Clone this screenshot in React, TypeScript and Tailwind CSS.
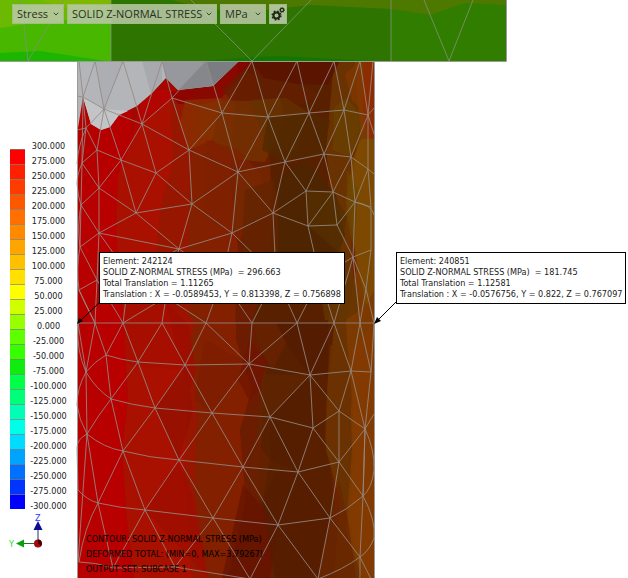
import { ChevronDown } from 'lucide-react';

type Point = [number, number];

const legendColors = [
  '#ff0000', '#ff2000', '#ff3c00', '#ff5600', '#ff7000', '#ff8a00', '#ffa500', '#ffc000',
  '#ffe000', '#ffff00', '#d0ff00', '#98ff00', '#60ff00', '#38ff00', '#10ec10', '#00ff48',
  '#00ff78', '#00ffb4', '#00ffe8', '#00dcff', '#00a4ff', '#0070ff', '#0034ff', '#0000ff',
];

const legendValues = Array.from({ length: 25 }, (_, i) => (300 - i * 25).toFixed(3));

const nodes: Record<string, Point> = {
  t0: [79, 61], t1: [95, 61], t2: [123, 61], t3: [162, 61], t4: [206, 61], t5: [252, 61],
  t6: [297, 61], t7: [334, 61], t8: [360, 61], t9: [373, 61],
  a0: [77, 96], a1: [83, 97], a2: [104, 109], a3: [142, 124], a4: [172, 98], a5: [222, 113],
  a6: [268, 117], a7: [309, 113], a8: [344, 110], a9: [368, 115], ar: [374, 108], as: [374, 134],
  b0: [77, 130], b1: [86, 128], b2: [97, 150], b3: [82, 163], b4: [121, 160], b5: [156, 173],
  b6: [189, 150], b7: [238, 172], b8: [285, 162], b9: [324, 154], b10: [351, 157], b11: [368, 169],
  br: [374, 174],
  c0: [99, 188], c1: [81, 205], c2: [136, 213], c3: [192, 204], c4: [273, 213], c5: [306, 191],
  c6: [333, 192], c7: [355, 202], c8: [371, 207],
  d0: [99, 233], d1: [80, 247], d2: [179, 249], d3: [232, 233], d4: [308, 226], d5: [337, 225],
  d6: [353, 257], d7: [371, 250],
  e0: [97, 280], e1: [79, 290], p1: [129, 275], p2: [166, 297], p3: [222, 279], p4: [276, 276],
  p5: [320, 278], e2: [366, 289],
  f0: [78, 323], f1: [95, 323], f2: [123, 323], f3: [162, 323], f4: [206, 323], f5: [252, 323],
  f6: [297, 323], f7: [334, 323], f8: [360, 323], f9: [374, 323],
  g0: [106, 355], g1: [86, 372], g2: [138, 362], g3: [185, 365], g4: [249, 364], g5: [310, 375],
  g6: [351, 371], g7: [371, 372],
  h0: [111, 399], h1: [87, 434], h2: [155, 408], h3: [212, 413], h4: [270, 417], h5: [313, 428],
  h6: [339, 411], h7: [365, 429], hr: [374, 414],
  i1: [123, 451], i2: [179, 460], i3: [243, 467], i4: [298, 472], i5: [339, 462], i6: [363, 496],
  j1: [98, 503], j2: [145, 510], j3: [213, 518], j4: [278, 525], j5: [330, 518], j6: [360, 557],
  k1: [113, 568], k2: [175, 567], k3: [250, 579], k4: [318, 579], k5: [360, 579], k6: [371, 579],
};

// each entry walks along the element edges from node to node
const meshPaths = [
  't0 a1 t1 a2 t2 a3 t3 a4 t4 a5 t5 a6 t6 a7 t7 a8 t8 a9 t9',
  'a0 a1 a2 a3 a4 a5 a6 a7 a8 a9 ar',
  'a1 b1 a2 b2', 'a1 b3', 'a2 b4 a3 b5 c2', 'a3 b6 a4', 'b6 a5 b7 a6 b8 a7 b9 a8 b10 a9 b11',
  'a9 as', 'b0 b1 b2 b3 b1', 'b2 b4 b5 b6 b7 b8 b9 b10 b11 br',
  'b2 c0 b3 c1', 'c0 b4 c2', 'b5 c3 b6', 'c3 b7 d3', 'b7 c4 b8 c5 b9 c6 b10 c7 b11 c8',
  'c1 c0 c2 c3 d2 c2', 'c0 d0 c1 d1 d0 c2', 'p1 d0 e0', 'c3 d3 c4 c5 c6 c7 c8',
  'c4 d4 c5', 'd4 c6 d5 c7 d6', 'd2 d3 p4 c4', 'd2 d0', 'd2 p1', 'd2 p2', 'd2 p3 d3',
  'd4 d5 d6 d7 c8', 'd4 p5 d6', 'd6 e2 d7', 'd1 e0 e1',
  'e0 f1 e1', 'e0 f2 p1', 'f2 p2 f3', 'p2 f4 p3 f5 p4 f6 p5 f7 d6 f8 e2 f9',
  'f0 f1 f2 f3 f4 f5 f6 f7 f8 f9',
  'f0 g1 f1 g0 f2 g2 f3 g3 f4 g4 f5', 'g4 f6 g5 f7 g6 f8 g7 f9',
  'g2 g3 g4 g5 g6 g7', 'g1 h1', 'g0 h0 g2 h2 g3 h3 g4 h4 g5 h5',
  'g5 h6 g6 h7 g7', 'h2 h3 h4 h5 h6 h7 hr',
  'h0 i1 h2 i2 h3 i3 h4 i4 h5 i5 h6', 'i5 h7 i6', 'h1 j1 i1 j2 i2 j3 i3 j4 i4 j5 i5 i6',
  'i2 i3 i4 i5', 'j2 j3 j4 j5', 'j1 k1 j2 k2 j3 k3 j4 k4 j5 j6 k5', 'j6 k6', 'k1 k2 k3',
];

// edges that follow the curved side of the solid
const curvedEdges = [
  'M86 128Q78 146 77 164', 'M82 163Q77 175 77 184Q78 197 81 205', 'M81 205Q77 226 80 247',
  'M80 247Q76 268 79 290Q85 304 95 323', 'M106 355Q95 361 86 372', 'M106 355Q121 360 138 362',
  'M78 323Q76 350 86 372Q77 388 77 405Q79 420 87 434', 'M86 372Q96 389 111 399Q99 414 87 434',
  'M111 399Q132 405 155 408', 'M87 434Q104 448 123 451Q150 458 179 460',
  'M87 434Q77 439 77 448L78 490', 'M78 490Q87 500 98 503Q120 508 145 510', 'M98 503Q84 528 79 562Q95 562 113 568',
  'M87 434L78 562', 'M365 429Q375 450 374 470Q372 488 363 496Q347 510 330 518',
  'M363 496Q376 520 374 538Q370 550 360 557Q344 569 318 579', 'M365 429L363 496L360 557',
  'M355 202Q372 205 374 215',
];

const bands: { fill: string; points: string }[] = [
  { fill: '#b80000', points: '77,61 130,61 132,150 118,175 116,230 124,323 128,400 122,450 127,520 134,578 77,578' },
  { fill: '#a91000', points: '142,90 176,90 180,150 165,210 158,270 180,323 192,370 194,450 196,500 206,578 134,578 127,520 122,450 128,400 124,323 116,230 118,175 132,140' },
  { fill: '#961600', points: '170,90 202,88 192,150 190,210 190,270 194,340 198,420 194,490 208,578 192,578 184,480 188,390 182,323 155,280 160,210 173,160' },
  { fill: '#832000', points: '194,80 240,61 240,130 235,180 238,250 235,323 245,350 252,390 240,430 246,500 232,578 208,578 194,490 198,420 190,340 188,250 190,180' },
  { fill: '#6c1c00', points: '238,61 270,61 268,140 270,210 262,270 252,323 266,360 258,410 260,460 268,500 276,578 228,578 246,500 240,430 252,390 236,340 238,250 230,180' },
  { fill: '#592000', points: '252,61 345,61 336,120 326,200 332,270 328,323 328,410 330,460 336,520 340,578 274,578 258,490 262,430 266,370 252,323 266,270 274,210 268,140' },
  { fill: '#6a3200', points: '334,61 362,61 360,120 350,170 352,260 358,323 355,430 352,520 365,578 334,578 340,500 326,450 328,380 328,323 338,270 334,210 326,150' },
  { fill: '#7c3a00', points: '355,61 375,61 375,578 362,578 346,530 352,450 350,390 346,323 356,270 350,190 360,130' },
];

const facets: { fill: string; points: string }[] = [
  { fill: '#b60000', points: '77,97 83,97 91,124 101,130 110,127 119,115 137,106 151,94 166,78 178,90 172,98 142,124 128,150 118,175 77,190' },
  { fill: '#8b0000', points: '239,61 255,61 215,105 178,104 169,92 213,86' },
  { fill: '#5c1000', points: '252,61 340,61 328,85 298,84 264,78 244,72' },
  { fill: '#661d00', points: '252,62 264,78 298,84 322,96 268,117 235,105 222,90' },
  { fill: '#743300', points: '200,105 222,100 250,101 280,98 285,120 265,162 238,160 212,140 200,135' },
  { fill: '#8a3000', points: '185,100 222,98 212,140 189,150 180,124' },
  { fill: '#643200', points: '250,100 286,98 309,113 296,150 268,150' },
  { fill: '#512800', points: '268,117 309,113 330,120 324,154 285,162 262,150' },
  { fill: '#6a4100', points: '334,108 346,98 358,112 362,140 351,157 333,150' },
  { fill: '#823800', points: '345,74 360,61 368,115 352,100' },
  { fill: '#932800', points: '364,61 374,61 374,138 368,138 363,110' },
  { fill: '#7d4e00', points: '361,139 374,139 374,290 366,306 355,250 347,200 352,160' },
  { fill: '#6b4500', points: '347,170 358,190 354,250 346,215' },
  { fill: '#7e2200', points: '206,140 238,150 262,175 258,210 240,240 205,215' },
  { fill: '#762800', points: '235,175 270,165 270,213 232,233' },
  { fill: '#622400', points: '245,190 273,180 284,230 268,290 240,290' },
  { fill: '#4c2500', points: '278,180 306,160 336,195 345,235 338,253 278,253' },
  { fill: '#543000', points: '306,191 333,192 347,217 340,253 308,226' },
  { fill: '#643600', points: '322,302 338,265 356,285 358,312 340,323 325,320' },
  { fill: '#a60f00', points: '124,302 170,302 195,323 180,370 128,365' },
  { fill: '#9b0e00', points: '166,302 188,323 196,370 190,390 177,350' },
  { fill: '#a81000', points: '130,420 155,408 179,460 145,510 124,470' },
  { fill: '#9d0d00', points: '179,460 145,510 208,578 194,500' },
  { fill: '#931000', points: '155,408 185,365 193,410 179,460' },
  { fill: '#7e1c00', points: '205,340 249,364 212,413 194,400' },
  { fill: '#721400', points: '249,340 268,360 260,390 249,400 238,380' },
  { fill: '#6a2200', points: '252,323 297,323 272,370 260,350' },
  { fill: '#531b00', points: '276,323 334,323 330,375 310,375 290,350' },
  { fill: '#602400', points: '262,374 310,375 270,417 256,440' },
  { fill: '#541d00', points: '270,417 310,375 313,428 298,472 270,460' },
  { fill: '#6c3200', points: '330,345 348,350 352,400 345,455 325,440 327,390' },
  { fill: '#853b00', points: '352,350 374,323 374,578 362,578 350,520 354,450' },
  { fill: '#682200', points: '254,440 270,460 262,505 248,480' },
  { fill: '#651300', points: '243,485 278,525 270,578 222,578' },
  { fill: '#561c00', points: '278,470 298,472 330,518 318,578 276,578 262,500' },
  { fill: '#6b2500', points: '339,480 348,520 356,578 318,578 330,518' },
];

const outsideRange = '77,61 239,61 213,86 178,90 166,78 151,94 137,106 119,115 110,127 101,130 91,124 83,97 78,128';

interface CalloutProps {
  lines: string[];
  className: string;
}

function Callout({ lines, className }: CalloutProps) {
  return (
    <div className={`absolute border border-black bg-white px-[3px] py-[3px] ${className}`}>
      {lines.map((line) => (
        <p key={line} className="whitespace-pre leading-[11px]">
          {line}
        </p>
      ))}
    </div>
  );
}

interface DropdownProps {
  label: string;
  value: string;
  className: string;
}

function Dropdown({ label, value, className }: DropdownProps) {
  return (
    <div className={`relative h-5 ${className}`}>
      <select
        aria-label={label}
        defaultValue={value}
        className="block h-full w-full appearance-none border border-[#9fc07c] bg-[#bdc9ac]/85 pl-1 text-[11px] leading-4 text-[#26331c]"
      >
        <option>{value}</option>
      </select>
      <ChevronDown className="pointer-events-none absolute right-1 top-1.5 h-2 w-2 text-[#3c4a30]" strokeWidth={3} />
    </div>
  );
}

function GearsIcon() {
  return (
    <svg width="16" height="18" viewBox="0 0 16 18" fill="none" stroke="currentColor" aria-hidden="true">
      <circle cx="6.500" cy="10.500" r="3" strokeWidth="2" />
      <circle cx="6.500" cy="10.500" r="4.300" strokeWidth="1.600" strokeDasharray="1.690 1.690" />
      <circle cx="12" cy="5" r="1.700" strokeWidth="1.200" />
      <circle cx="12" cy="5" r="2.500" strokeWidth=".800" strokeDasharray=".980 .980" />
    </svg>
  );
}

function Model() {
  return (
    <svg className="absolute left-0 top-0" width="628" height="578" viewBox="0 0 628 578" aria-hidden="true">
      {/* top plate */}
      <path fill="#48b700" d="M0 0h111v61H0z" />
      <path fill="#6bb900" d="M0 0h111v6L68 20 34 23 0 28z" />
      <path fill="#7eb800" d="M40 0h71v4L62 8z" />
      <path fill="#1cb600" d="M0 53 40 51 106 61H0z" />
      <path fill="#2e7400" d="M111 0h395v61H111z" />
      <path fill="#317d00" d="M391 0h115v61H391z" />
      <path fill="#4d7900" d="M172 0h334v5l-41-2-35 12-39-6-80-4-70 8-50-8z" />
      <path fill="#117700" d="M205 61 252 57 280 56 370 61z" />
      <path
        fill="none"
        stroke="#83917a"
        strokeOpacity=".8"
        d="M21 0 28 61 63 0M111 0V61M191 0 252 61 311 0M391 0V61M424 0 449 61 473 0"
      />
      {/* solid body */}
      <path fill="#6c2000" d="M77 61h298v517H77z" />
      {bands.map((band) => (
        <polygon key={band.points} fill={band.fill} points={band.points} />
      ))}
      {facets.map((facet) => (
        <polygon key={facet.points} fill={facet.fill} fillOpacity=".75" points={facet.points} />
      ))}
      <polygon fill="#b4b5b9" points={outsideRange} />
      <path fill="#c3c4c6" d="M83 97 104 109 128 111 119 115 110 127 101 130 91 124z" />
      <path fill="#adaeb3" d="M95 61 104 109 123 61z" />
      <path fill="#a8a9ae" d="M142 61H162V82L151 94z" />
      <path fill="#97989d" d="M162 61H206L178 90 166 78z" />
      <path fill="#86878c" d="M206 61 178 90 213 86z" />
      <path fill="#7c7d83" d="M206 61h33l-26 25z" />
      <g fill="none" stroke="#948a84" strokeOpacity=".85">
        {meshPaths.map((path) => (
          <polyline
            key={path}
            points={path
              .split(' ')
              .map((id) => nodes[id].join(','))
              .join(' ')}
          />
        ))}
        {curvedEdges.map((d) => (
          <path key={d} d={d} />
        ))}
      </g>
      <path fill="none" stroke="#9a9a98" d="M0 61.500H506.500V0M77.500 61V578M374.500 61V578" />
      {/* callout leaders */}
      <path stroke="#000" d="M100 302 79 322M397 301 376 322" />
      <path d="M77 324 79 318 83 321zM374 324 377 317 381 321z" />
    </svg>
  );
}

function AxisTriad() {
  return (
    <svg width="40" height="36" viewBox="0 2 40 36" aria-hidden="true">
      <path stroke="#203070" d="M30 31V16" />
      <path stroke="#207020" d="M30 31.500H14" />
      <path fill="#0c0c96" d="M25.500 18 30 9 34.500 18z" />
      <path fill="#08a00c" d="M16 27.500 8 31.500 16 35.500z" />
      <circle cx="30" cy="31.500" r="4" fill="#a00c10" />
      <path fill="#480000" d="M30 31.500V27.500A4 4 0 0 1 33 34z" />
      <text x="27" y="9" fontSize="9" fill="#3434ff">
        Z
      </text>
      <text x="1" y="35" fontSize="9" fill="#20e020">
        Y
      </text>
    </svg>
  );
}

export default function App() {
  return (
    <main className="relative min-h-screen overflow-hidden bg-white font-['DejaVu_Sans_Condensed','DejaVu_Sans',sans-serif] text-[9px] text-[#1a1a1a]">
      <Model />

      <div className="relative flex flex-col">
        <header className="flex gap-[3px] pl-3 pt-1 font-['Open_Sans',sans-serif]">
          <Dropdown label="Result type" value="Stress" className="w-[52px]" />
          <Dropdown label="Component" value="SOLID Z-NORMAL STRESS" className="w-[150px]" />
          <Dropdown label="Unit" value="MPa" className="w-[46px]" />
          <button
            type="button"
            aria-label="Plot settings"
            className="h-5 w-[18px] border border-[#9fc07c] bg-[#bdc9ac]/90 text-[#1c2912]"
          >
            <GearsIcon />
          </button>
        </header>

        <section aria-label="Contour legend" className="flex gap-[5px] pl-[10px] pt-[115px]">
          <div className="pt-[10px]">
            {legendColors.map((color) => (
              <div
                key={color}
                className="h-[15px] w-[15px] border-t border-[#808080]/70"
                style={{ backgroundColor: color }}
              />
            ))}
          </div>
          <ol className="w-[37px] text-center">
            {legendValues.map((value) => (
              <li key={value} className="leading-[15px]">
                {value}
              </li>
            ))}
          </ol>
        </section>

        <footer className="flex items-start gap-[38px] pl-2">
          <AxisTriad />
          <div className="pt-[18px] leading-[15px] text-black">
            <p>CONTOUR: SOLID Z-NORMAL STRESS (MPa)</p>
            <p>DEFORMED TOTAL: (MIN=0, MAX=3.79267)</p>
            <p>OUTPUT SET: SUBCASE 1</p>
          </div>
        </footer>
      </div>

      <Callout
        className="left-[99px] top-[252px]"
        lines={[
          'Element: 242124',
          'SOLID Z-NORMAL STRESS (MPa)  = 296.663',
          'Total Translation = 1.11265',
          'Translation : X = -0.0589453, Y = 0.813398, Z = 0.756898',
        ]}
      />
      <Callout
        className="left-[396px] top-[252px]"
        lines={[
          'Element: 240851',
          'SOLID Z-NORMAL STRESS (MPa)  = 181.745',
          'Total Translation = 1.12581',
          'Translation : X = -0.0576756, Y = 0.822, Z = 0.767097',
        ]}
      />
    </main>
  );
}
